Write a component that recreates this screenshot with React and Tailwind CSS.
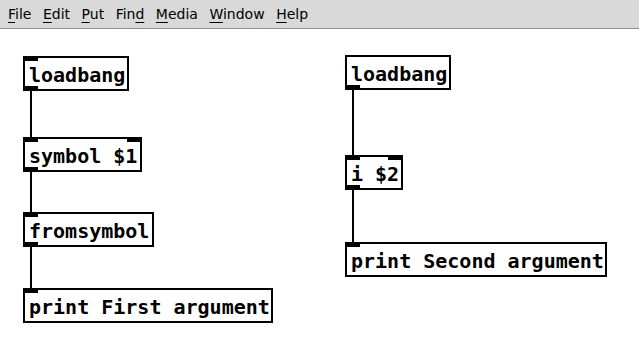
const menus = [
  { pre: '', u: 'F', post: 'ile' },
  { pre: '', u: 'E', post: 'dit' },
  { pre: '', u: 'P', post: 'ut' },
  { pre: 'Fin', u: 'd', post: '' },
  { pre: '', u: 'M', post: 'edia' },
  { pre: '', u: 'W', post: 'indow' },
  { pre: '', u: 'H', post: 'elp' },
];

// patch objects, coordinates relative to the canvas (menu bar is 29px)
const boxes = [
  { text: 'loadbang', x: 23, y: 27, w: 106, inlets: 1 },
  { text: 'symbol $1', x: 23, y: 108, w: 119, inlets: 2 },
  { text: 'fromsymbol', x: 23, y: 183, w: 131, inlets: 1 },
  { text: 'print First argument', x: 23, y: 259, w: 250, inlets: 1, noOut: true },
  { text: 'loadbang', x: 345, y: 26, w: 106, inlets: 0 },
  { text: 'i $2', x: 345, y: 126, w: 58, inlets: 2 },
  { text: 'print Second argument', x: 345, y: 213, w: 262, inlets: 1, noOut: true },
];

const cords = [
  { x: 30, y1: 62, y2: 108 },
  { x: 30, y1: 143, y2: 183 },
  { x: 30, y1: 218, y2: 259 },
  { x: 352, y1: 61, y2: 126 },
  { x: 352, y1: 161, y2: 213 },
];

function PdBox({ box }) {
  return (
    <div
      className="absolute h-[35px] border-2 border-black bg-white flex items-center pl-[4px] pt-[2px] box-border"
      style={{ left: box.x, top: box.y, width: box.w }}
    >
      {box.inlets >= 1 && <div className="absolute -left-[2px] -top-[2px] w-[15px] h-[5px] bg-black" />}
      {box.inlets === 2 && <div className="absolute -right-[2px] -top-[2px] w-[15px] h-[5px] bg-black" />}
      {!box.noOut && <div className="absolute -left-[2px] -bottom-[2px] w-[15px] h-[5px] bg-black" />}
      <span className="font-['DejaVu_Sans_Mono',monospace] font-bold text-[20px] leading-none text-black whitespace-pre">
        {box.text}
      </span>
    </div>
  );
}

export default function App() {
  return (
    <div className="w-[639px] h-[355px] bg-white flex flex-col overflow-hidden">
      <div className="h-[29px] bg-[#d9d9d9] border-b border-[#8c8c8c] flex items-center pl-[8px] gap-[11.5px] font-['DejaVu_Sans',sans-serif] text-[14px] text-black shrink-0">
        {menus.map((m, i) => (
          <span key={i} className="leading-none">
            {m.pre}
            <span className="underline underline-offset-[3px] decoration-1">{m.u}</span>
            {m.post}
          </span>
        ))}
      </div>
      <div className="relative flex-1 bg-white">
        {cords.map((c, i) => (
          <div
            key={i}
            className="absolute w-[2px] bg-black"
            style={{ left: c.x, top: c.y1, height: c.y2 - c.y1 }}
          />
        ))}
        {boxes.map((b, i) => (
          <PdBox key={i} box={b} />
        ))}
      </div>
    </div>
  );
}
